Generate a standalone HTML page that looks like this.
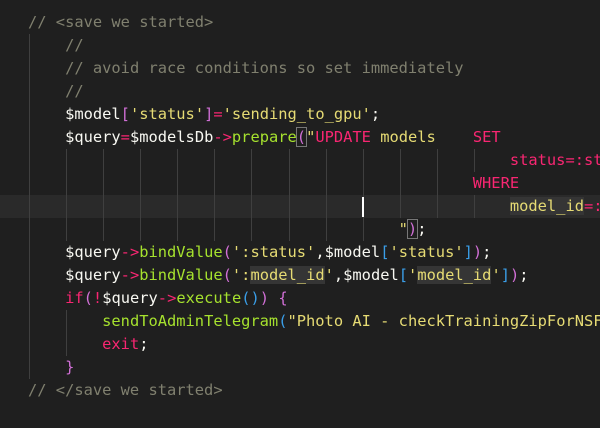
<!DOCTYPE html>
<html><head><meta charset="utf-8"><style>
html,body{margin:0;padding:0;background:#1f1f1f;width:600px;height:428px;overflow:hidden}
#ed{position:relative;width:600px;height:428px;font-family:"DejaVu Sans Mono","Liberation Mono",monospace;font-size:15.4px;color:#f8f8f2;top:1px}
.l{position:absolute;left:28px;height:23px;line-height:23px;white-space:pre}
.g{position:absolute;width:1px;background:#3f3f3f}
.c{color:#80806f}.s{color:#e6db74}.p{color:#f92672}.f{color:#a6e22e}.b{color:#d16fd6}.u{color:#3a9ee8}
.h{background:#353535}
.bx{outline:1px solid #777;}
</style></head><body><div id="ed">
<div style="position:absolute;left:0;top:194px;width:600px;height:23px;background:#2a2a2a"></div>
<div class="g" style="left:29px;top:33px;height:345px"></div>
<div class="g" style="left:66px;top:309px;height:46px"></div>
<div id="gd"></div>
<div style="position:absolute;left:362px;top:196px;width:2px;height:20px;background:#fff"></div>
<div class="l" style="top:10px"><span class="c">// &lt;save we started&gt;</span></div>
<div class="l" style="top:33px">    <span class="c">//</span></div>
<div class="l" style="top:56px">    <span class="c">// avoid race conditions so set immediately</span></div>
<div class="l" style="top:79px">    <span class="c">//</span></div>
<div class="l" style="top:102px">    $model<span class="b">[</span><span class="s">'status'</span><span class="b">]</span><span class="p">=</span><span class="s">'sending_to_gpu'</span>;</div>
<div class="l" style="top:125px">    $query<span class="p">=</span>$modelsDb<span class="p">-&gt;</span><span class="f">prepare</span><span class="b bx">(</span><span class="s">"</span><span class="p">UPDATE</span><span class="s"> models    </span><span class="p">SET</span></div>
<div class="l" style="top:148px">                                                    <span class="p">status=:st</span></div>
<div class="l" style="top:171px">                                                <span class="p">WHERE</span></div>
<div class="l" style="top:194px">                                                    <span class="s h">model_id</span><span class="p">=:</span></div>
<div class="l" style="top:217px">                                        <span class="s">"</span><span class="b bx">)</span>;</div>
<div class="l" style="top:240px">    $query<span class="p">-&gt;</span><span class="f">bindValue</span><span class="b">(</span><span class="s">':status'</span>,$model<span class="u">[</span><span class="s">'status'</span><span class="u">]</span><span class="b">)</span>;</div>
<div class="l" style="top:263px">    $query<span class="p">-&gt;</span><span class="f">bindValue</span><span class="b">(</span><span class="s">':<span class="h">model_id</span>'</span>,$model<span class="u">[</span><span class="s">'<span class="h">model_id</span>'</span><span class="u">]</span><span class="b">)</span>;</div>
<div class="l" style="top:286px">    <span class="p">if</span><span class="b">(</span><span class="p">!</span>$query<span class="p">-&gt;</span><span class="f">execute</span><span class="u">()</span><span class="b">)</span> <span class="b">{</span></div>
<div class="l" style="top:309px">        <span class="f">sendToAdminTelegram</span><span class="u">(</span><span class="s">"Photo AI - checkTrainingZipForNSFW</span></div>
<div class="l" style="top:332px">        <span class="p">exit</span>;</div>
<div class="l" style="top:355px">    <span class="b">}</span></div>
<div class="l" style="top:378px"><span class="c">// &lt;/save we started&gt;</span></div>
</div>
<script>
var gd=document.getElementById('gd'),cw=9.27;
function g(col,row){var d=document.createElement('div');d.className='g';d.style.left=(28+col*cw+1)+'px';d.style.top=(10+row*23)+'px';d.style.height='23px';gd.appendChild(d);}
var lim={6:48,7:44,8:48,9:36};
for(var r=6;r<=9;r++){for(var c=4;c<=lim[r];c+=4)g(c,r);}
</script>
</body></html>
